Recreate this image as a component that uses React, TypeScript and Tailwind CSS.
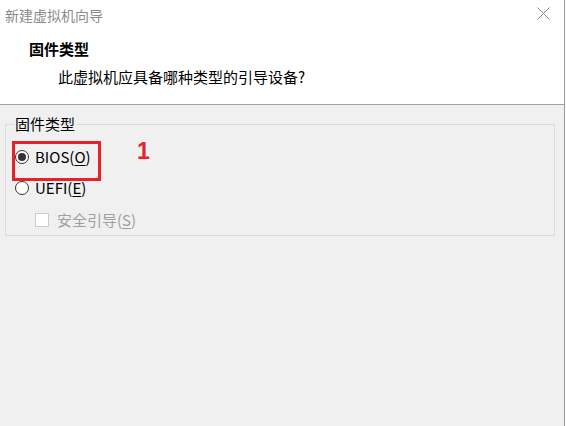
import React from 'react';

const cjk = "font-['Noto_Sans_CJK_SC','Noto_Sans',sans-serif]";

// Radio button, Windows style
function Radio({ checked }: { checked?: boolean }) {
  return (
    <span className="w-[14px] h-[14px] rounded-full border border-[#333333] bg-white flex items-center justify-center shrink-0">
      {checked && <span className="w-[8px] h-[8px] rounded-full bg-[#333333]" />}
    </span>
  );
}

function App() {
  return (
    <div className={`w-[566px] h-[426px] bg-white relative overflow-hidden ${cjk}`}>
      <div className="w-[565px] h-[426px] border-r border-[#9a9a9a] bg-[#f0f0f0] flex flex-col">
        {/* Header */}
        <div className="h-[105px] bg-white border-b border-[#a0a0a0] flex flex-col">
          <div className="h-[29px] flex items-center justify-between pl-[5px] pr-[14px]">
            <span className="text-[14px] leading-[20px] text-[#8a8a8a]">新建虚拟机向导</span>
            <svg width="13" height="13" viewBox="0 0 13 13" className="mt-[-2px]">
              <path d="M0.5 0.5 L12.5 12.5 M12.5 0.5 L0.5 12.5" stroke="#8a8a8a" strokeWidth="1" />
            </svg>
          </div>
          <div className="pl-[29px] pt-[10px] text-[15px] leading-[20px] font-bold text-black">固件类型</div>
          <div className="pl-[58px] pt-[8px] text-[15px] leading-[20px] text-black">此虚拟机应具备哪种类型的引导设备?</div>
        </div>

        {/* Body */}
        <fieldset className="ml-[5px] mt-[9px] w-[550px] border border-[#dcdcdc] pb-[4px]">
          <legend className="ml-[8px] px-[1px] text-[15px] leading-[20px] text-black">固件类型</legend>
          <div className="mt-[12px] h-[22px] pl-[9px] flex items-center gap-[6px] text-[15px] text-black">
            <Radio checked />
            <span>BIOS(<span className="underline underline-offset-2">O</span>)</span>
          </div>
          <div className="mt-[9px] h-[22px] pl-[9px] flex items-center gap-[6px] text-[15px] text-black">
            <Radio />
            <span>UEFI(<span className="underline underline-offset-2">E</span>)</span>
          </div>
          <div className="mt-[10px] h-[22px] pl-[29px] flex items-center gap-[8px] text-[15px] text-[#a0a0a0]">
            <span className="w-[14px] h-[14px] border border-[#cccccc] bg-white shrink-0" />
            <span>安全引导(<span className="underline underline-offset-2">S</span>)</span>
          </div>
        </fieldset>
      </div>

      {/* Annotation */}
      <div className="absolute left-[12px] top-[141px] w-[89px] h-[40px] border-[3px] border-[#e3222b]" />
      <div className="absolute left-[137px] top-[137px] text-[23px] leading-[28px] font-bold text-[#e3222b] font-['Liberation_Sans',sans-serif] [text-shadow:0_0_2px_#ffffff]">
        1
      </div>
    </div>
  );
}

export default App;
